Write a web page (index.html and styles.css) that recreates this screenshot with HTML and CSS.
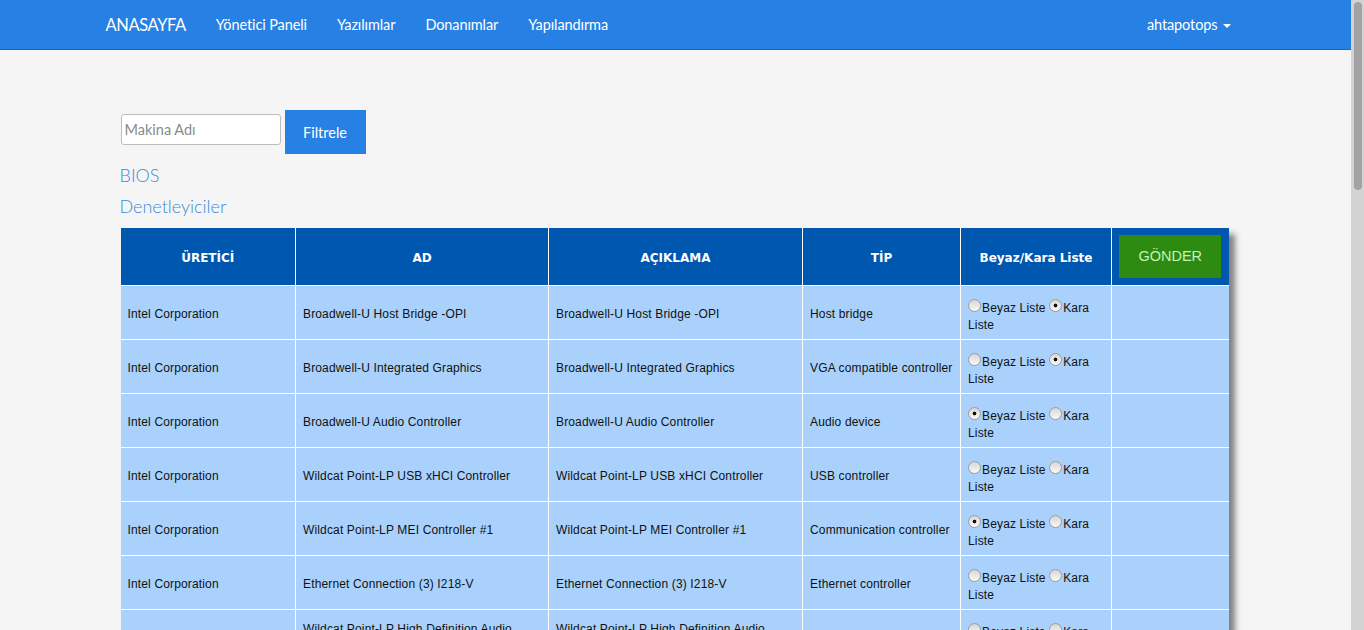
FILE: index.html
```html
<!DOCTYPE html>
<html lang="tr">
<head>
<meta charset="utf-8">
<title>Denetleyiciler</title>
<link rel="stylesheet" href="styles.css">
</head>
<body>
<div class="page">
<nav class="navbar">
  <div class="container nav-inner">
    <div class="nav-left">
      <a class="brand" href="#">ANASAYFA</a>
      <a class="nav-link" href="#">Yönetici Paneli</a>
      <a class="nav-link" href="#">Yazılımlar</a>
      <a class="nav-link" href="#">Donanımlar</a>
      <a class="nav-link" href="#">Yapılandırma</a>
    </div>
    <a class="nav-link user" href="#">ahtapotops <span class="caret"></span></a>
  </div>
</nav>
<main class="container content">
  <form class="filter">
    <input class="filter-input" type="text" placeholder="Makina Adı">
    <button class="filter-btn" type="button">Filtrele</button>
  </form>
  <a class="section-link" href="#">BIOS</a>
  <a class="section-link" href="#">Denetleyiciler</a>
  <table class="grid">
    <colgroup>
      <col class="c1"><col class="c2"><col class="c3"><col class="c4"><col class="c5"><col class="c6">
    </colgroup>
    <thead>
      <tr>
        <th>ÜRETİCİ</th>
        <th>AD</th>
        <th>AÇIKLAMA</th>
        <th>TİP</th>
        <th>Beyaz/Kara Liste</th>
        <th><button class="send" type="button">GÖNDER</button></th>
      </tr>
    </thead>
    <tbody>
      <tr><td>Intel Corporation</td><td>Broadwell-U Host Bridge -OPI</td><td>Broadwell-U Host Bridge -OPI</td><td>Host bridge</td><td class="choice"><input class="rb" type="radio" name="r1">Beyaz Liste <input class="rb" type="radio" name="r1" checked>Kara Liste</td><td></td></tr>
      <tr><td>Intel Corporation</td><td>Broadwell-U Integrated Graphics</td><td>Broadwell-U Integrated Graphics</td><td>VGA compatible controller</td><td class="choice"><input class="rb" type="radio" name="r2">Beyaz Liste <input class="rb" type="radio" name="r2" checked>Kara Liste</td><td></td></tr>
      <tr><td>Intel Corporation</td><td>Broadwell-U Audio Controller</td><td>Broadwell-U Audio Controller</td><td>Audio device</td><td class="choice"><input class="rb" type="radio" name="r3" checked>Beyaz Liste <input class="rb" type="radio" name="r3">Kara Liste</td><td></td></tr>
      <tr><td>Intel Corporation</td><td>Wildcat Point-LP USB xHCI Controller</td><td>Wildcat Point-LP USB xHCI Controller</td><td>USB controller</td><td class="choice"><input class="rb" type="radio" name="r4">Beyaz Liste <input class="rb" type="radio" name="r4">Kara Liste</td><td></td></tr>
      <tr><td>Intel Corporation</td><td>Wildcat Point-LP MEI Controller #1</td><td>Wildcat Point-LP MEI Controller #1</td><td>Communication controller</td><td class="choice"><input class="rb" type="radio" name="r5" checked>Beyaz Liste <input class="rb" type="radio" name="r5">Kara Liste</td><td></td></tr>
      <tr><td>Intel Corporation</td><td>Ethernet Connection (3) I218-V</td><td>Ethernet Connection (3) I218-V</td><td>Ethernet controller</td><td class="choice"><input class="rb" type="radio" name="r6">Beyaz Liste <input class="rb" type="radio" name="r6">Kara Liste</td><td></td></tr>
      <tr><td>Intel Corporation</td><td>Wildcat Point-LP High Definition Audio Controller</td><td>Wildcat Point-LP High Definition Audio Controller</td><td>Audio device</td><td class="choice"><input class="rb" type="radio" name="r7">Beyaz Liste <input class="rb" type="radio" name="r7">Kara Liste</td><td></td></tr>
      <tr><td>Intel Corporation</td><td>Wildcat Point-LP PCI Express Root Port #1</td><td>Wildcat Point-LP PCI Express Root Port #1</td><td>PCI bridge</td><td class="choice"><input class="rb" type="radio" name="r8">Beyaz Liste <input class="rb" type="radio" name="r8">Kara Liste</td><td></td></tr>
      <tr><td>Intel Corporation</td><td>Wildcat Point-LP PCI Express Root Port #3</td><td>Wildcat Point-LP PCI Express Root Port #3</td><td>PCI bridge</td><td class="choice"><input class="rb" type="radio" name="r9">Beyaz Liste <input class="rb" type="radio" name="r9">Kara Liste</td><td></td></tr>
      <tr><td>Intel Corporation</td><td>Wildcat Point-LP PCI Express Root Port #4</td><td>Wildcat Point-LP PCI Express Root Port #4</td><td>PCI bridge</td><td class="choice"><input class="rb" type="radio" name="r10">Beyaz Liste <input class="rb" type="radio" name="r10">Kara Liste</td><td></td></tr>
      <tr><td>Intel Corporation</td><td>Wildcat Point-LP USB EHCI Controller</td><td>Wildcat Point-LP USB EHCI Controller</td><td>USB controller</td><td class="choice"><input class="rb" type="radio" name="r11">Beyaz Liste <input class="rb" type="radio" name="r11">Kara Liste</td><td></td></tr>
      <tr><td>Intel Corporation</td><td>Wildcat Point-LP LPC Controller</td><td>Wildcat Point-LP LPC Controller</td><td>ISA bridge</td><td class="choice"><input class="rb" type="radio" name="r12">Beyaz Liste <input class="rb" type="radio" name="r12">Kara Liste</td><td></td></tr>
      <tr><td>Intel Corporation</td><td>Wildcat Point-LP SATA Controller [AHCI Mode]</td><td>Wildcat Point-LP SATA Controller [AHCI Mode]</td><td>SATA controller</td><td class="choice"><input class="rb" type="radio" name="r13">Beyaz Liste <input class="rb" type="radio" name="r13">Kara Liste</td><td></td></tr>
      <tr><td>Intel Corporation</td><td>Wildcat Point-LP SMBus Controller</td><td>Wildcat Point-LP SMBus Controller</td><td>SMBus</td><td class="choice"><input class="rb" type="radio" name="r14">Beyaz Liste <input class="rb" type="radio" name="r14">Kara Liste</td><td></td></tr>
      <tr><td>Intel Corporation</td><td>Wildcat Point-LP Thermal Management Controller</td><td>Wildcat Point-LP Thermal Management Controller</td><td>Signal processing controller</td><td class="choice"><input class="rb" type="radio" name="r15">Beyaz Liste <input class="rb" type="radio" name="r15">Kara Liste</td><td></td></tr>
      <tr><td>Intel Corporation</td><td>Wireless 7265</td><td>Wireless 7265</td><td>Network controller</td><td class="choice"><input class="rb" type="radio" name="r16">Beyaz Liste <input class="rb" type="radio" name="r16">Kara Liste</td><td></td></tr>
      <tr><td>NVIDIA Corporation</td><td>GM108M [GeForce 940M]</td><td>GM108M [GeForce 940M]</td><td>3D controller</td><td class="choice"><input class="rb" type="radio" name="r17">Beyaz Liste <input class="rb" type="radio" name="r17">Kara Liste</td><td></td></tr>
      <tr><td>Realtek Semiconductor</td><td>RTS5227 PCI Express Card Reader</td><td>RTS5227 PCI Express Card Reader</td><td>Unassigned class</td><td class="choice"><input class="rb" type="radio" name="r18">Beyaz Liste <input class="rb" type="radio" name="r18">Kara Liste</td><td></td></tr>
      <tr><td>Linux Foundation</td><td>2.0 root hub</td><td>2.0 root hub</td><td>Hub</td><td class="choice"><input class="rb" type="radio" name="r19">Beyaz Liste <input class="rb" type="radio" name="r19">Kara Liste</td><td></td></tr>
      <tr><td>Linux Foundation</td><td>3.0 root hub</td><td>3.0 root hub</td><td>Hub</td><td class="choice"><input class="rb" type="radio" name="r20">Beyaz Liste <input class="rb" type="radio" name="r20">Kara Liste</td><td></td></tr>
      <tr><td>Intel Corp.</td><td>Integrated Rate Matching Hub</td><td>Integrated Rate Matching Hub</td><td>Hub</td><td class="choice"><input class="rb" type="radio" name="r21">Beyaz Liste <input class="rb" type="radio" name="r21">Kara Liste</td><td></td></tr>
      <tr><td>Chicony Electronics</td><td>HD WebCam</td><td>HD WebCam</td><td>Video</td><td class="choice"><input class="rb" type="radio" name="r22">Beyaz Liste <input class="rb" type="radio" name="r22">Kara Liste</td><td></td></tr>
      <tr><td>Intel Corp.</td><td>Bluetooth wireless interface</td><td>Bluetooth wireless interface</td><td>Wireless</td><td class="choice"><input class="rb" type="radio" name="r23">Beyaz Liste <input class="rb" type="radio" name="r23">Kara Liste</td><td></td></tr>
      <tr><td>Logitech, Inc.</td><td>Unifying Receiver</td><td>Unifying Receiver</td><td>HID</td><td class="choice"><input class="rb" type="radio" name="r24">Beyaz Liste <input class="rb" type="radio" name="r24">Kara Liste</td><td></td></tr>
      <tr><td>SanDisk Corp.</td><td>Cruzer Blade</td><td>Cruzer Blade</td><td>Mass storage</td><td class="choice"><input class="rb" type="radio" name="r25">Beyaz Liste <input class="rb" type="radio" name="r25">Kara Liste</td><td></td></tr>
      <tr><td>Samsung Electronics</td><td>SSD 850 EVO</td><td>SSD 850 EVO</td><td>Disk</td><td class="choice"><input class="rb" type="radio" name="r26">Beyaz Liste <input class="rb" type="radio" name="r26">Kara Liste</td><td></td></tr>
      <tr><td>Seagate Technology</td><td>ST1000LM024 HN-M101MBB</td><td>ST1000LM024 HN-M101MBB</td><td>Disk</td><td class="choice"><input class="rb" type="radio" name="r27">Beyaz Liste <input class="rb" type="radio" name="r27">Kara Liste</td><td></td></tr>
      <tr><td>HL-DT-ST</td><td>DVDRAM GUE1N</td><td>DVDRAM GUE1N</td><td>CD-ROM</td><td class="choice"><input class="rb" type="radio" name="r28">Beyaz Liste <input class="rb" type="radio" name="r28">Kara Liste</td><td></td></tr>
      <tr><td>Synaptics</td><td>TM3096-001 Touchpad</td><td>TM3096-001 Touchpad</td><td>Input device</td><td class="choice"><input class="rb" type="radio" name="r29">Beyaz Liste <input class="rb" type="radio" name="r29">Kara Liste</td><td></td></tr>
      <tr><td>AT Translated</td><td>Set 2 keyboard</td><td>Set 2 keyboard</td><td>Input device</td><td class="choice"><input class="rb" type="radio" name="r30">Beyaz Liste <input class="rb" type="radio" name="r30">Kara Liste</td><td></td></tr>
    </tbody>
  </table>
</main>
</div>
<div class="scrollbar" aria-hidden="true"><div class="scroll-thumb"></div></div>
</body>
</html>
```
FILE: styles.css
```css
html, body {
  margin: 0;
  padding: 0;
}
body {
  background: #f5f5f5;
  font-family: Lato, "Open Sans", sans-serif;
  color: #222;
}
.page {
  margin-right: 13px;
}
.scrollbar {
  position: fixed;
  top: 0;
  right: 0;
  width: 13px;
  height: 100%;
  background: #d3d3d3;
  z-index: 10;
}
.scroll-thumb {
  margin: 2px 0 0 3px;
  width: 8px;
  height: 188px;
  background: #a3a3a3;
  border-radius: 4px;
}
.container {
  width: 1170px;
  margin: 0 auto;
  padding: 0 15px;
  box-sizing: border-box;
}
.navbar {
  background: #2780e3;
  height: 50px;
  border-bottom: 1px solid #1967be;
  box-sizing: border-box;
}
.nav-inner {
  display: flex;
  justify-content: space-between;
  align-items: center;
  height: 49px;
}
.nav-left {
  display: flex;
  align-items: center;
}
.brand {
  color: #fff;
  font-size: 16.5px;
  text-decoration: none;
  padding: 0 15px 0 0;
  letter-spacing: -0.4px;
}
.nav-link {
  color: #fff;
  font-size: 14.5px;
  text-decoration: none;
  padding: 0 15px;
  letter-spacing: -0.1px;
}
.user {
  display: flex;
  align-items: center;
  gap: 5px;
}
.caret {
  display: inline-block;
  width: 0;
  height: 0;
  border-left: 4px solid transparent;
  border-right: 4px solid transparent;
  border-top: 4px solid #fff;
  margin-top: 2px;
}
.content {
  padding-top: 60px;
  padding-left: 30px;
  padding-bottom: 40px;
}
.filter {
  display: flex;
  align-items: center;
  gap: 4px;
  margin: 0 0 6px 0;
}
.filter-input {
  width: 160px;
  height: 31px;
  box-sizing: border-box;
  border: 1px solid #bdbdbd;
  border-radius: 3px;
  padding: 0 3px;
  font-family: Lato, sans-serif;
  font-size: 14.5px;
  margin-top: -5px;
  background: #fff;
}
.filter-input::placeholder {
  color: #8a8a8a;
}
.filter-btn {
  width: 81px;
  height: 44px;
  background: #2780e3;
  color: #fff;
  border: 0;
  font-family: Lato, sans-serif;
  font-size: 14.5px;
  padding: 0;
}
.section-link {
  display: block;
  color: #3d8ad9;
  font-size: 18px;
  font-weight: 300;
  text-decoration: none;
  line-height: 31px;
  margin-left: -1px;
}
.section-link + .section-link {
  margin-bottom: 6px;
}
.grid {
  border-collapse: collapse;
  width: 1108px;
  table-layout: fixed;
  box-shadow: 6px 6px 6px #808080;
  font-family: "Liberation Sans", Arial, sans-serif;
}
.c1 { width: 175px; }
.c2 { width: 253px; }
.c3 { width: 254px; }
.c4 { width: 158px; }
.c5 { width: 151px; }
.c6 { width: 117px; }
.grid th {
  background: #0057b0;
  color: #fff;
  font-family: "DejaVu Sans", Verdana, sans-serif;
  font-weight: bold;
  font-size: 12px;
  height: 57px;
  padding: 3px 7px 0;
  border: 1px solid #fff;
  border-top: 0;
  text-align: center;
  box-sizing: border-box;
}
.grid th:first-child { border-left: 0; }
.grid th:last-child { border-right: 0; }
.send {
  display: block;
  width: 102px;
  height: 43px;
  background: #2e8b12;
  color: #c4f2b8;
  border: 0;
  font-family: "Liberation Sans", Arial, sans-serif;
  font-size: 14.5px;
  padding: 0;
  margin: -3px auto 0;
}
.grid td {
  background: #a9d1fb;
  color: #111;
  font-size: 12px;
  letter-spacing: 0.15px;
  line-height: 17px;
  padding: 11px 7px 7px;
  border: 1px solid #fff;
  vertical-align: middle;
}
.grid td.choice {
  padding-top: 13px;
  padding-bottom: 5px;
}
.grid td:first-child { border-left: 0; }
.grid td:last-child { border-right: 0; }
.rb {
  appearance: none;
  -webkit-appearance: none;
  width: 13px;
  height: 13px;
  margin: 0 1px 0 0;
  border-radius: 50%;
  border: 1px solid #9a9a9a;
  box-sizing: border-box;
  background: linear-gradient(#d6d6d6, #fafafa);
  vertical-align: 0;
}
.rb:checked {
  background: radial-gradient(circle at 50% 50%, #111 0 1.6px, transparent 2.2px), linear-gradient(#d6d6d6, #fafafa);
}
```
